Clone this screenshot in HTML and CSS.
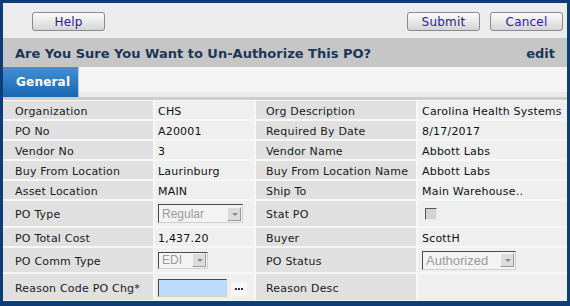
FILE: index.html
```html
<!DOCTYPE html>
<html lang="en">
<head>
  <meta charset="UTF-8">
  <meta name="viewport" content="width=device-width, initial-scale=1.0">
  <title>Un-Authorize PO</title>
  <link rel="stylesheet" href="styles.css">
</head>
<body>
  <div class="window">
    <!-- Toolbar -->
    <div class="toolbar">
      <button class="btn">Help</button>
      <div class="toolbar-right">
        <button class="btn">Submit</button>
        <button class="btn">Cancel</button>
      </div>
    </div>

    <!-- Title -->
    <div class="title-bar">
      <h1>Are You Sure You Want to Un-Authorize This PO?</h1>
      <span class="edit">edit</span>
    </div>

    <!-- Tabs -->
    <div class="tabs">
      <div class="tab active">General</div>
    </div>

    <!-- Form -->
    <div class="form-grid">
      <div class="label">Organization</div>
      <div class="value">CHS</div>
      <div class="label right">Org Description</div>
      <div class="value">Carolina Health Systems</div>

      <div class="label">PO No</div>
      <div class="value">A20001</div>
      <div class="label right">Required By Date</div>
      <div class="value">8/17/2017</div>

      <div class="label">Vendor No</div>
      <div class="value">3</div>
      <div class="label right">Vendor Name</div>
      <div class="value">Abbott Labs</div>

      <div class="label">Buy From Location</div>
      <div class="value">Laurinburg</div>
      <div class="label right">Buy From Location Name</div>
      <div class="value">Abbott Labs</div>

      <div class="label">Asset Location</div>
      <div class="value">MAIN</div>
      <div class="label right">Ship To</div>
      <div class="value">Main Warehouse..</div>

      <div class="label">PO Type</div>
      <div class="value">
        <div class="select select-type"><span>Regular</span><span class="arrow"></span></div>
      </div>
      <div class="label right">Stat PO</div>
      <div class="value"><span class="checkbox"></span></div>

      <div class="label">PO Total Cost</div>
      <div class="value">1,437.20</div>
      <div class="label right">Buyer</div>
      <div class="value">ScottH</div>

      <div class="label">PO Comm Type</div>
      <div class="value">
        <div class="select select-comm"><span>EDI</span><span class="arrow"></span></div>
      </div>
      <div class="label right">PO Status</div>
      <div class="value">
        <div class="select select-status"><span>Authorized</span><span class="arrow"></span></div>
      </div>

      <div class="label">Reason Code PO Chg*</div>
      <div class="value">
        <input type="text" class="reason-input">
        <span class="lookup">
          <svg width="9" height="2" viewBox="0 0 9 2"><rect x="0" y="0" width="2" height="2" fill="#333"/><rect x="3" y="0" width="2" height="2" fill="#333"/><rect x="6" y="0" width="2" height="2" fill="#333"/></svg>
        </span>
      </div>
      <div class="label right">Reason Desc</div>
      <div class="value"></div>
    </div>
  </div>
</body>
</html>
```

FILE: styles.css
```css
body {
  margin: 0;
  padding: 0;
  font-family: "DejaVu Sans", Verdana, sans-serif;
  font-size: 11px;
  color: #111;
}

.window {
  width: 570px;
  height: 306px;
  box-sizing: border-box;
  border: 3px solid #0c3d78;
  border-bottom-width: 5px;
  background: #f0f0f0;
  display: flex;
  flex-direction: column;
}

/* Toolbar */
.toolbar {
  height: 35px;
  flex: none;
  box-sizing: border-box;
  background: #ececec;
  display: flex;
  align-items: flex-start;
  justify-content: space-between;
  padding: 9px 4px 0 29px;
}

.toolbar-right {
  display: flex;
  gap: 10px;
}

.btn {
  width: 73px;
  height: 19px;
  padding: 0;
  font-family: "DejaVu Sans", Verdana, sans-serif;
  font-size: 12px;
  letter-spacing: 0.2px;
  color: #2a1c9c;
  background: linear-gradient(#fbfbfb, #e6e6e6 55%, #d4d4d4);
  border: 1px solid #8a8a8a;
  border-radius: 3px;
  line-height: 16px;
}

/* Title */
.title-bar {
  height: 29px;
  flex: none;
  box-sizing: border-box;
  background: #c6c6c6;
  display: flex;
  align-items: center;
  justify-content: space-between;
  padding: 1px 12px 0 12px;
  color: #1d3657;
  font-weight: bold;
  font-size: 13px;
}

.title-bar h1 {
  font-size: 13px;
  margin: 0;
}

/* Tabs */
.tabs {
  height: 33px;
  flex: none;
  box-sizing: border-box;
  background: linear-gradient(#f5f5f5 0, #f5f5f5 25px, #ebebeb 25px);
  border-bottom: 3px solid #cdcdcd;
  display: flex;
}

.tab {
  width: 76px;
  height: 30px;
  box-sizing: border-box;
  padding-left: 13px;
  display: flex;
  align-items: center;
  font-size: 12px;
  font-weight: bold;
  letter-spacing: 0.2px;
}

.tab.active {
  color: #fff;
  background: linear-gradient(#4590d4, #1767b3);
  border-right: 1px solid #b8c8d8;
}

/* Form grid */
.form-grid {
  flex: 1;
  display: grid;
  grid-template-columns: 150px 99px 160px 149px;
  grid-template-rows: 18px 18px 18px 18px 18px 25px 18px 24px 26px;
  column-gap: 2px;
  row-gap: 2px;
  padding: 1px 0 0 0;
  background: #f7f7f7;
  letter-spacing: 0.2px;
}

.label {
  background: #e0e0e0;
  display: flex;
  align-items: center;
  padding: 2px 0 0 12px;
  color: #1a1a1a;
  white-space: nowrap;
}

.label.right {
  padding-left: 10px;
}

.value {
  background: #efefef;
  display: flex;
  align-items: center;
  padding: 2px 0 0 3px;
  white-space: nowrap;
}

.form-grid .value:nth-child(4n) {
  padding-left: 4px;
}

/* Faux select */
.select {
  height: 19px;
  box-sizing: border-box;
  display: flex;
  align-items: center;
  justify-content: space-between;
  background: #f3f3f3;
  border: 1px solid;
  border-color: #4a4a4a #d0d0d0 #d0d0d0 #4a4a4a;
  color: #9a9a9a;
  font-family: "Liberation Sans", Arial, sans-serif;
  font-size: 12px;
  letter-spacing: 0;
  padding: 0 1px 0 3px;
  margin-top: -2px;
}

.select-type {
  width: 85px;
}

.select-comm {
  width: 50px;
  height: 17px;
}

.select-status {
  width: 94px;
  font-size: 13px;
}

.select .arrow {
  width: 14px;
  height: 14px;
  box-sizing: border-box;
  background: #dcdcdc;
  border: 1px solid;
  border-color: #f4f4f4 #9a9a9a #9a9a9a #f4f4f4;
  position: relative;
}

.select .arrow::after {
  content: "";
  position: absolute;
  left: 4px;
  top: 5px;
  border-left: 3px solid transparent;
  border-right: 3px solid transparent;
  border-top: 3px solid #8a8a8a;
}

.checkbox {
  width: 12px;
  height: 12px;
  box-sizing: border-box;
  margin-left: 3px;
  margin-top: -2px;
  background: #d2d2d2;
  border: 1px solid;
  border-color: #555 #e8e8e8 #e8e8e8 #555;
}

.reason-input {
  width: 69px;
  height: 18px;
  box-sizing: border-box;
  margin: 0;
  background: #bddcfb;
  border: 1px solid;
  border-color: #4a4a4a #d0d0d0 #d0d0d0 #4a4a4a;
}

.lookup {
  width: 16px;
  height: 14px;
  margin-left: 4px;
  margin-top: 2px;
  background: #f7f7f7;
  display: flex;
  align-items: center;
  justify-content: center;
}
```
